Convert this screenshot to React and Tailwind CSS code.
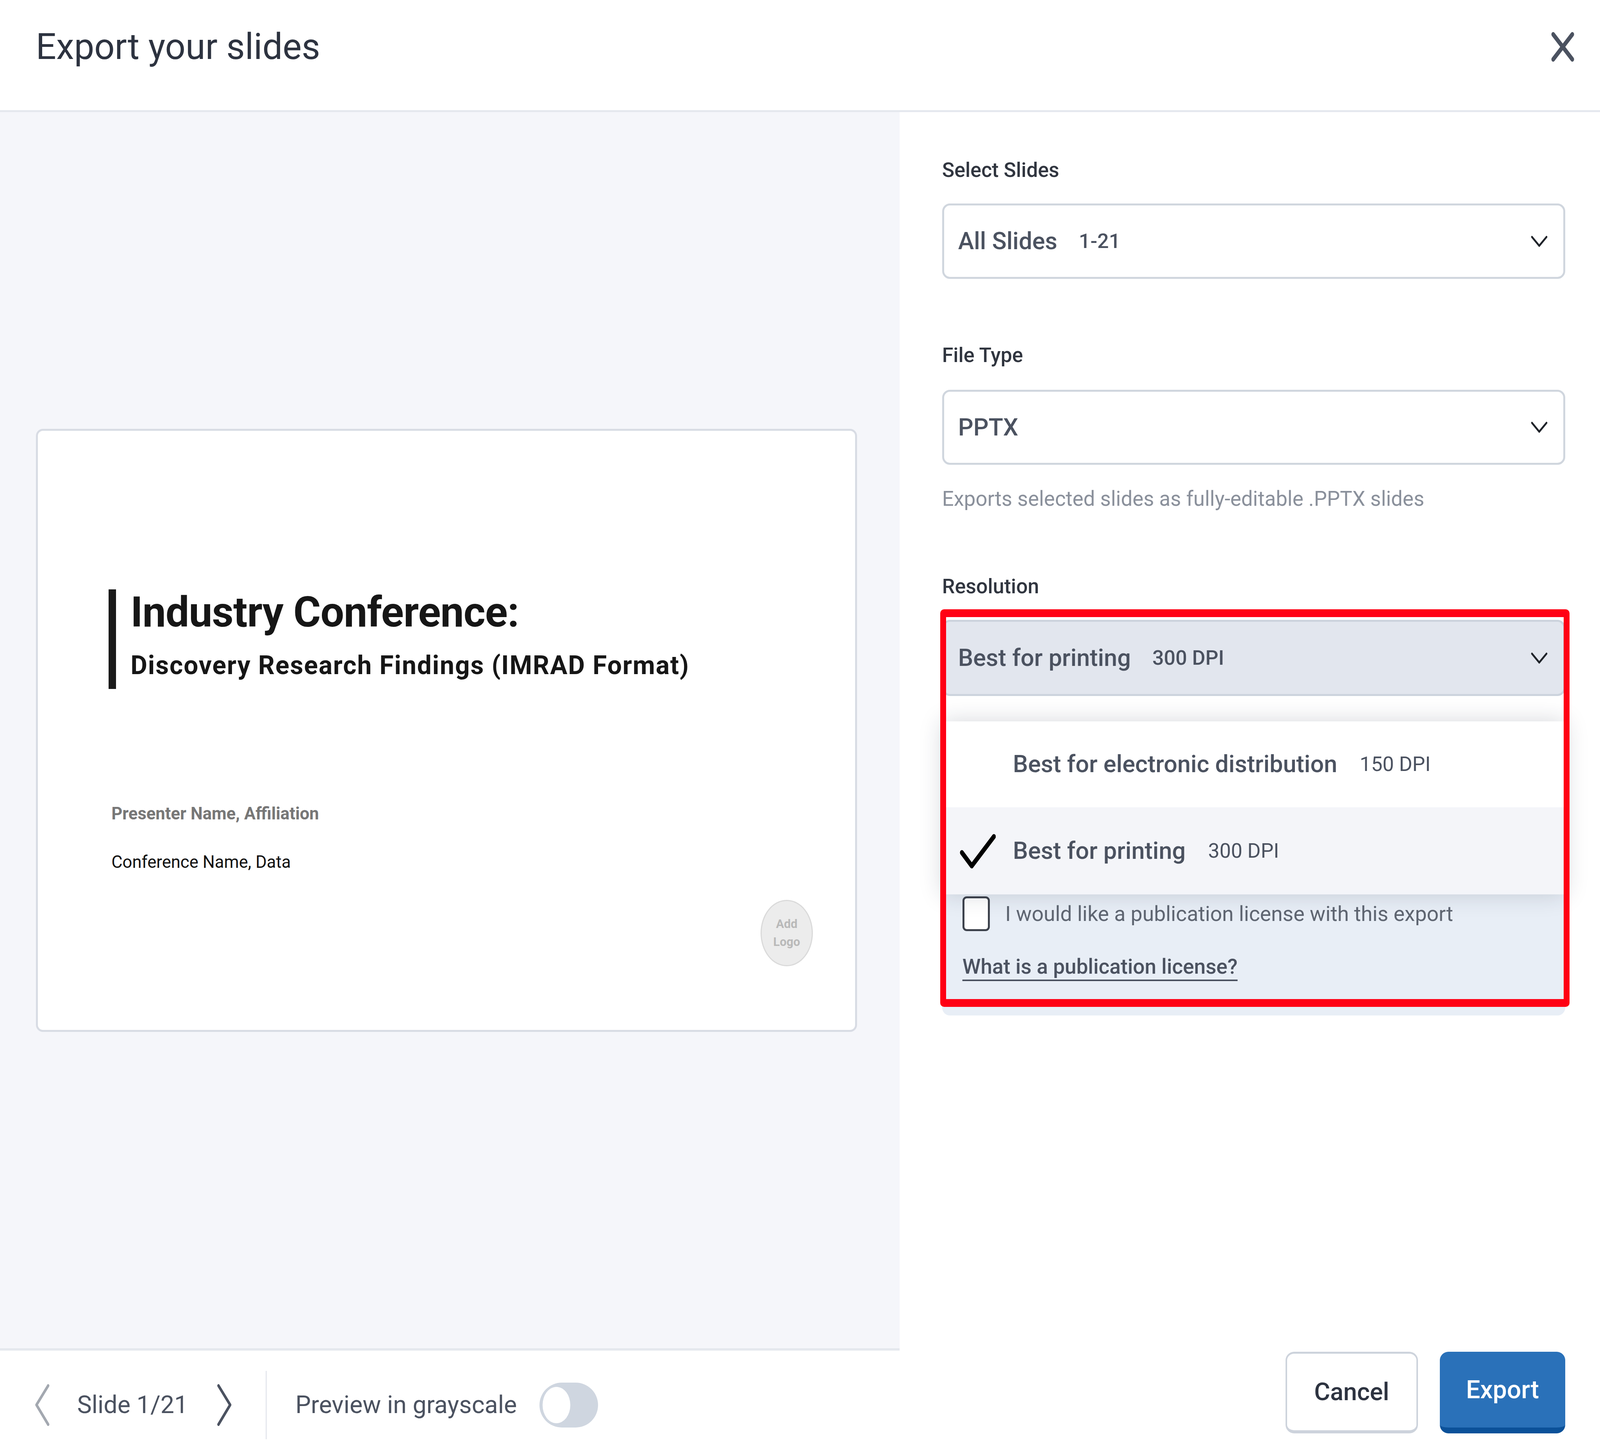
import { useState } from 'react'

// The window is narrower than the 5350px design, so widths are in vw
// (1vw = 53.5 design px) while heights stay in px (the height is the same 3710px).

function Chevron() {
  return (
    <svg viewBox="0 0 60 32" preserveAspectRatio="none" className="ml-auto w-[1.047vw] h-[30px]" fill="none">
      <polyline points="4,4 30,28 56,4" stroke="#1f2329" strokeWidth="6" strokeLinecap="round" strokeLinejoin="round" />
    </svg>
  )
}

function Select({ label, hint, active, h = 'h-[193px]' }) {
  return (
    <div
      className={`flex items-center ${h} rounded-[20px] border-[5px] pl-[0.879vw] pr-[0.991vw] ${
        active ? 'bg-[#e2e6ee] border-[#ccd3dd]' : 'bg-white border-[#d0d6de]'
      }`}
    >
      <span className="text-[1.495vw] font-medium text-[#4b5260] leading-none">{label}</span>
      {hint && <span className="ml-[1.346vw] text-[1.271vw] font-medium text-[#4b5260] leading-none">{hint}</span>}
      <Chevron />
    </div>
  )
}

function Label({ children, className = '' }) {
  return <label className={`text-[1.271vw] leading-none font-medium text-[#30353f] ${className}`}>{children}</label>
}

export default function App() {
  const [gray, setGray] = useState(false)

  return (
    <div className="w-screen h-screen flex flex-col bg-white font-['Roboto',sans-serif] overflow-hidden">
      {/* Header */}
      <header className="h-[287px] shrink-0 border-b-[5px] border-[#e5e8ee]">
        <div className="h-[240px] flex items-center pl-[2.243vw] pr-[1.589vw]">
          <h1 className="text-[2.243vw] leading-none font-normal text-[#2d3340]">Export your slides</h1>
          <button className="ml-auto w-[1.495vw] h-[80px]" title="Close">
            <svg viewBox="0 0 80 80" preserveAspectRatio="none" className="w-full h-full" fill="none">
              <line x1="8" y1="8" x2="72" y2="72" stroke="#4b5260" strokeWidth="12" strokeLinecap="round" />
              <line x1="72" y1="8" x2="8" y2="72" stroke="#4b5260" strokeWidth="12" strokeLinecap="round" />
            </svg>
          </button>
        </div>
      </header>

      <div className="flex-1 flex min-h-0">
        {/* Left: preview */}
        <section className="w-[56.224vw] shrink-0 flex flex-col">
          <div className="flex-1 bg-[#f5f6fa] flex items-center pl-[2.243vw]">
            <div className="relative w-[51.327vw] h-[1544px] bg-white border-[5px] border-[#d8dce4] rounded-[18px] pl-[4.43vw] pt-[406px]">
              <div className="flex items-start">
                <div className="w-[0.467vw] h-[255px] bg-[#1a1a1a] shrink-0" />
                <div className="ml-[0.897vw] mt-[5px] flex flex-col">
                  <div className="text-[2.617vw] leading-none font-bold text-[#161616] tracking-[-0.019vw]">Industry Conference:</div>
                  <div className="mt-[50px] text-[1.607vw] leading-none font-bold text-[#161616] tracking-[0.047vw]">
                    Discovery Research Findings (IMRAD Format)
                  </div>
                </div>
              </div>
              <div className="mt-[298px] ml-[0.168vw] text-[1.065vw] leading-none font-bold text-[#777777]">Presenter Name, Affiliation</div>
              <div className="mt-[81px] ml-[0.168vw] text-[1.065vw] leading-none text-[#111111]">Conference Name, Data</div>

              <div className="absolute right-[2.654vw] bottom-[163px] w-[3.252vw] h-[170px] rounded-[50%] bg-[#ececec] border-[3px] border-[#dadada] flex flex-col items-center justify-center text-[0.748vw] leading-[46px] font-bold text-[#b9b9b9]">
                <span>Add</span>
                <span>Logo</span>
              </div>
            </div>
          </div>

          {/* Slide nav */}
          <footer className="h-[258px] shrink-0 border-t-[6px] border-[#e5e8ee] flex items-center pt-[26px] pl-[2.15vw]">
            <svg viewBox="0 0 53 107" preserveAspectRatio="none" className="w-[0.991vw] h-[107px]" fill="none">
              <polyline points="46,4 7,53 46,103" stroke="#a3a8b0" strokeWidth="8" strokeLinecap="round" strokeLinejoin="round" />
            </svg>
            <span className="ml-[1.682vw] text-[1.533vw] leading-none text-[#4b5260]">Slide 1/21</span>
            <svg viewBox="0 0 53 107" preserveAspectRatio="none" className="ml-[1.776vw] w-[0.991vw] h-[107px]" fill="none">
              <polyline points="7,4 46,53 7,103" stroke="#4b5260" strokeWidth="8" strokeLinecap="round" strokeLinejoin="round" />
            </svg>
            <div className="ml-[2.075vw] w-[3px] h-[175px] bg-[#e5e8ee]" />
            <span className="ml-[1.794vw] text-[1.533vw] leading-none text-[#4b5260]">Preview in grayscale</span>
            <button
              onClick={() => setGray(!gray)}
              className={`ml-[1.402vw] w-[3.664vw] h-[115px] rounded-full px-[0.206vw] py-[11px] flex ${
                gray ? 'bg-[#2a71b9] justify-end' : 'bg-[#cfd6e0] justify-start'
              }`}
            >
              <span className="w-[1.738vw] h-[93px] rounded-[50%] bg-white" />
            </button>
          </footer>
        </section>

        {/* Right: settings */}
        <section className="flex-1 flex flex-col pl-[2.654vw] pr-[2.168vw] pt-[123px] pb-[40px]">
          <Label>Select Slides</Label>
          <div className="mt-[59px]">
            <Select label="All Slides" hint="1-21" />
          </div>

          <Label className="mt-[170px]">File Type</Label>
          <div className="mt-[62px]">
            <Select label="PPTX" h="h-[192px]" />
          </div>
          <p className="mt-[61px] text-[1.29vw] leading-none text-[#8a909b]">Exports selected slides as fully-editable .PPTX slides</p>

          <Label className="mt-[172px]">Resolution</Label>
          <div className="relative mt-[59px]">
            <Select label="Best for printing" hint="300 DPI" active h="h-[195px]" />

            {/* Publication license */}
            <div className="mt-[70px] h-[748px] rounded-[20px] bg-[#e8eef6] pt-[443px] pl-[1.271vw]">
              <div className="flex items-center">
                <span className="w-[1.72vw] h-[89px] rounded-[11px] border-[5px] border-[#3d424c] bg-white" />
                <span className="ml-[0.953vw] text-[1.308vw] leading-none text-[#5f6672]">I would like a publication license with this export</span>
              </div>
              <a
                href="#"
                className="inline-block mt-[65px] text-[1.3vw] leading-none font-medium text-[#4b5260] underline underline-offset-[15px] decoration-[4px]"
              >
                What is a publication license?
              </a>
            </div>

            {/* Dropdown menu */}
            <div className="absolute left-0 right-0 top-[260px] bg-white shadow-[0_0_55px_rgba(30,40,60,0.18)]">
              <div className="h-[220px] flex items-center pl-[4.43vw]">
                <span className="text-[1.495vw] leading-none font-medium text-[#4b5260]">Best for electronic distribution</span>
                <span className="ml-[1.402vw] text-[1.271vw] leading-none text-[#4b5260]">150 DPI</span>
              </div>
              <div className="h-[223px] flex items-center bg-[#f4f5f9] pl-[1.028vw]">
                <svg viewBox="0 0 125 95" preserveAspectRatio="none" className="w-[2.336vw] h-[95px]" fill="none">
                  <polyline points="11,52 44,86 118,11" stroke="#000000" strokeWidth="13" strokeLinecap="round" strokeLinejoin="round" />
                </svg>
                <span className="ml-[1.065vw] text-[1.495vw] leading-none font-medium text-[#4b5260]">Best for printing</span>
                <span className="ml-[1.402vw] text-[1.271vw] leading-none text-[#4b5260]">300 DPI</span>
              </div>
            </div>

            {/* Highlight */}
            <div className="absolute -left-[0.112vw] -top-[27px] w-[39.327vw] h-[1018px] border-x-[0.374vw] border-y-[20px] border-[#ff0014] rounded-[10px] pointer-events-none" />
          </div>

          <div className="mt-auto flex justify-end items-end gap-[1.364vw]">
            <button className="w-[8.28vw] h-[209px] rounded-[22px] bg-white border-x-[4px] border-t-[5px] border-b-[8px] border-[#cdd3dc] text-[1.533vw] font-medium text-[#2d3340]">
              Cancel
            </button>
            <button className="w-[7.85vw] h-[209px] rounded-[22px] bg-[#2a71b9] border-b-[15px] border-[#0b5199] text-[1.57vw] font-medium text-white">
              Export
            </button>
          </div>
        </section>
      </div>
    </div>
  )
}
